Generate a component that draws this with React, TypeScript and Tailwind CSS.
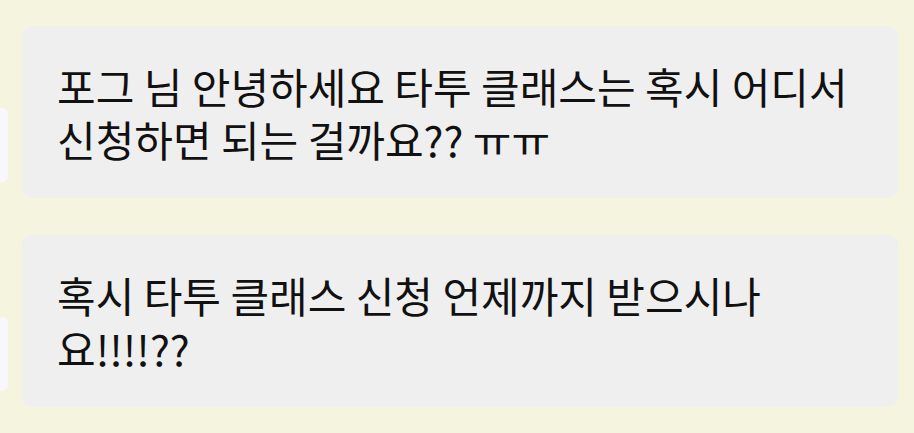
import React from "react";

const MESSAGES = [
  "포그 님 안녕하세요 타투 클래스는 혹시 어디서 신청하면 되는 걸까요?? ㅠㅠ",
  "혹시 타투 클래스 신청 언제까지 받으시나요!!!!??",
];

function Bubble({ text }: { text: string }) {
  return (
    <div className="flex items-start">
      <div className="mt-[82px] h-[74px] w-[8px] shrink-0 rounded-r-[6px] bg-[#f8f8fc]" />
      <div className="ml-[14px] w-[876px] shrink-0 rounded-[10px] bg-[#efefef] pl-[35px] pr-[41px] py-[33px]">
        <p className="w-[800px] text-[42px] leading-[53px] text-[#111]">{text}</p>
      </div>
    </div>
  );
}

export default function App() {
  return (
    <div
      className="flex h-[433px] w-[914px] flex-col gap-[37px] overflow-hidden bg-[#f5f4df] pt-[26px]"
      style={{ fontFamily: '"Noto Sans CJK KR", "Noto Sans", sans-serif' }}
    >
      {MESSAGES.map((m, i) => (
        <Bubble key={i} text={m} />
      ))}
    </div>
  );
}
